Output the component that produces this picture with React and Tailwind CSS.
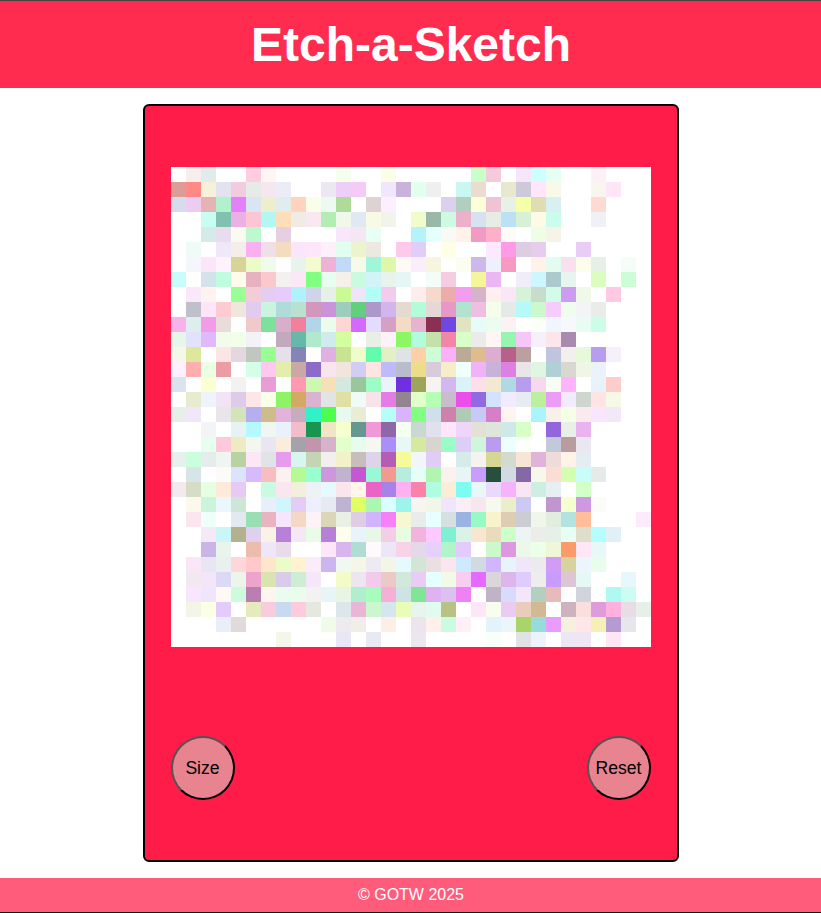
import React from "react";

// colours read off the drawn grid, "." is an untouched white cell
const rows = [
  ". f8eeee e0ebea . . ffcce0 fff5f3 . . . . f5ffee . . fbffe8 . . . . . cbffc9 f5cadd . f5e6f9 cdfffd e5fff3 . . fdf0f6 . . .",
  "dc9d98 ff8a85 f7f1da e2e3ee f2cbe0 e7ebe8 f6e6ef ececf7 . . ebe8f2 eecdf8 f3cbf5 . f0e7fc c9b3da e3ffed eef0ee . c9f7f1 ecdccf . e8e8cf cdc9db ffe6fd f9f9e9 . . f9f5ef ffe5f8 . .",
  "d8dcea eecbf0 e5b3b3 b0f2cc e381fa d9e6f2 edeecd e1ecef ffd3bd fafde9 eff9f4 aedb9a . ddd3d5 fdefff . . . ddcfee b2cebf feffd9 efc3d4 e8f1e8 f5ffa8 dfdeb3 d9f0f2 . . fddbd0 . . .",
  ". . c9fdf1 80c1af ecb1e4 fdc4d3 b2f7f4 ffdfb8 f0ebe3 f9e8f1 b2edb3 f2f7ec dfe9f1 f8fae6 f1f4eb . f0fcc9 99b8a8 cdfae0 edb0cb d6e2f1 e7ece5 bce0f4 d8f1d6 fdfbe6 ccfdec . . eff1f5 . . .",
  ". . d4ebe9 e9dcec f8fbee bdf8d0 . e6cee3 . . . f9e5fc f4e7f3 e8fff6 . . b5f2fc e5ffff f9faf6 fff2e8 f299c4 ffb0c8 fdfcf9 . edfde6 f6f4e8 . . . . . .",
  ". effbf6 . eee8f9 f5edea f8b0f0 f0dfe8 f4dcbe f9e6fd fde6f9 fcf1fb e0ffef ebf4cd eee8e2 . ffc9ec e0cdf8 . ffffe6 . . fde8fe ff9be6 ddcce2 e6cdee . . e9cdf7 . . . .",
  ". f4f6fb fde5f9 fef3fa d6d497 ebfcc9 f0fbeb . e7f4ee f2fccc f0b1d7 c3d9f8 f7f9e9 9ff6d9 dcf8a8 fffbf4 faedfc f7f5dd . fbfdef cdb8ec eef0fc f799c0 . fff3e8 e2fcf2 f8e0f0 fcfeec e6f0e6 . f4fdf8 .",
  "c9fdfb . d4e2ea c0fce0 fffbec e7b2bf f9c9cd f2f1ef fbe7f6 80ff80 e7fdef f5f0ea c9fbe0 d2f3f8 e9f3ec e6f6f5 . f4fcf8 f7cce3 . f5f599 ecb5f4 . f0ecf8 ccf7fe acc9cd e6f6ee . dcfdc0 . ccfdd4 .",
  ". f8e8f9 fff3f0 . 99ff95 f2ccd8 e5ccf1 e8cbfd aef2fc d0d4e9 e6f0e6 c9fa94 efe5f8 b0fef5 f2cbee . fdeeec f5d9cd edabac f39df0 d6b3c8 ffefef fae6f6 d6f2d9 c8dccc d2fbe8 cc9cf0 f0f9e9 . ffc9e3 . .",
  ". c0bfcc fee6f8 ffcbd3 efe6dc e2cbee c9f4de afdbd9 b9e0d0 d497bc c994d9 9dcdbd 62cf7c ae98cb d1b5ec e4dad0 b2fcd9 e6d8d6 e699c6 b3e3cf eebfe0 f5fdeb e4ebe6 b5f9f9 ccf9cc f6ccfe effdf0 f3f4f5 e9ece8 . . .",
  "f7b2ec e0edee f29be9 e9dddb . f2c9cb 7ce29b d8aecb f0809b b2d6e9 ebfbec ffd6d6 d26aff e4dcfe d6a0c6 f4dcc4 e8b3d0 8c3053 7047e0 e2e3c2 e6fcf8 ebfdf0 fbf3f3 . fbfff8 f0f6fd f7f8fd e8fcf4 ccfde8 . . .",
  "e8f5ea e2e2fd e1b8fa f2fcea f1fee8 f3f3f7 . c3a9be 66b8ad b0e9cb ceecec d4ff9e . e8f0e6 fcf2f8 8cf765 b0fcdd c4e0ab f285a8 d9ffc9 ebecea fff6f4 96f5b0 f6c6f9 f5f0fb fde5ec a98bb2 . . . . .",
  "f3f8e8 dde89d . fbe6e5 e4d7e1 bfc7bf 96ff8f e6e0ec 8484b6 . dfb0e2 c8e391 effdc9 62fdac e2f0c4 dfe3e4 ffd0a8 ccfdd5 fab0fb bbaa95 dfbc90 dcadcf b76089 bba0a0 . c1c4df f1f0ec e6fadb b79cef f6f0fc . .",
  "fef0fc feaeae eaffe4 ec9da4 . d5fee9 ffc8f0 e3eeac c9a8a5 8d6bc9 f8e5ee f2e5dd d2cdf5 ffe4e2 bfb9fe b8bccd eedd88 d8ccdc f7eec9 effffc f0b3f5 c9b2d9 dc80e2 e8e6e8 e0f5e2 b1d0d4 d8d8d0 f0f6e5 ecf2f9 . . .",
  "dbe3ee . fcffcf . f3f2f0 . e89dd4 fafffb ff98b0 cdf8b2 f5e0b8 d3e8de 99c79b 9cfec4 ecf3fa 702fe0 9ea55a f6f3f0 d3b8ef dcf2f9 fddfec f3e8d0 b0d9e3 b89ced f6d9ec f8fef4 ffb3fd . e8f3f9 ffcccc . .",
  ". e7ebcf eff3fc f2e4f5 dccce8 fce6e8 f8fee8 8ef465 d4a966 d9b3cf e0e4e3 dfdfa6 effcf6 f8e3eb e47ce8 928590 e2ffc9 b4ffb4 c9bccc ec4ee9 9169e0 d3e2fd f0ecfe e7ecf0 bbf09c ea9cf7 f1ebfc ced6cf ffe4e6 f5f9e6 . .",
  "e6f0e8 f2e6f9 . e9e5e8 d4e3b9 b7aef0 cfbc8b e3b3dc c6acbd 30f2c6 4cff4f e8f9f0 e9edd6 . b5fefa dab3fd 80ff80 cfe0ec cf80ad b1c9b7 c9c9f5 d580c6 fef5f0 . aaf5fd f7f1e8 f4ffe6 fae9ef f9e6fd f3e8f7 . .",
  ". . f3f4f8 . e6f3f5 b5f8fe eff7f0 ebf1fb f2bccb 18964f f0e5c4 f5ffd0 65998f f099d9 8f66a8 f4fff1 c9d8d0 e2e0ec fde6fa edd6fa e3e0d6 dee5db cfe9ea d9ffc9 . 9466de e8f0e8 e9b3ef . . . .",
  ". . e6ffee ffc9dc eeebc2 f3f7f0 e9e5f3 fbecdc a4a2ab c195ae d5b3cb e3ffcc e8fcee f4f8ee a98ffa e8f8f5 d6ea9f d8d4d0 99fdc6 ddcdf9 cff6dd b99cef ecffff fdfffb . c3c9d9 b89c9f ebe6f0 . . . .",
  "e6f1ed c9ffdc e5eceb eff6f2 b9d1a3 fde6f5 dfe5e7 e69cec d6f6ee c4d5b4 f3efef f1f1ca c7bdba ded4ea b55cb3 f5fa9b f2f6fa e0cdf5 . d6ecea f5f2f0 d6d696 d3dbd0 f7e5d5 dfb3da eedcd9 fff2e6 e6edf0 . . . .",
  ". d6e5e8 . fcfbf9 dce3fe d6bafd f8bdc0 fbf1ef b6fa95 99ffcf cd96dd c1b2d0 c557d4 99f9d6 f29a90 b8ece0 e6fff6 b0f5b0 fbf2f0 e8f5f6 c99cff 26503d d4dae3 8469a6 f7f8e9 fbddd6 d3ffb0 c9fdf9 e6ebea . . .",
  "f3e9ee d5dec4 e6ffe2 fdeada e6caf3 . c9fbe2 fbe5ee f2f0dc edf2f5 e6fafe f9e5ea fff5e9 ec63c7 a783e9 ffb0f0 f882a9 b0fce0 faeed9 7ffcf2 e9f7f8 ebd9fb f6b3fb f8e6f2 cdeee0 e6f0f3 . d3ffc9 . . . .",
  ". fcf8ec ccf4dc ecf7fd cde6d6 . e9eefb cff6fd e3ccf6 eeeffe e6eaf2 bfb3d2 e0ff60 acf7af daffff 9df4ea f6f5f2 f0f7e9 efe6fe fdeef6 f8e6ee f6faee ebefc9 ccc9f5 . c196cf f5ffd0 ce99e0 fbfbf9 . . .",
  ". fbe5ef effff9 . e2e9f0 9adeb4 e9b3c0 f5e6fe f3d8c5 fdf2f5 dcd6b8 e9f0e4 dfcde3 d2b3fd f680f8 f7f7d2 e9ecea e8ffff d6e0e1 9bb3e0 99f9c4 f9f3cd dccdb3 ccccd3 f1f6ea e1eddf b2e3e1 ffbd99 . . . fdeafb",
  ". . f6e9f7 c9f6f9 b4b18e dfd0f0 f9f2e5 b780d9 f5e8f5 e8fce8 b680d9 fdffec e8f3fc e9f8e6 f4cde6 e8fce2 f2b3de ffc9ff 80f0d3 dcf2e6 f7e7cf e8dcbc ccffc9 ecf4f5 ecece9 e6f0e9 e8fdf4 dddfcd b5fefe e0f0f6 . .",
  ". . c9b6e6 e9f5ec . ecbcac f0e6f9 e9dbe9 . . fde6f5 d6b6ec b0dcd3 fef9fd ebe7f6 f8d2e6 e3d9e8 e6d0fd b0f5c9 e3ccfb . ccf9cc dc99e0 edf8e9 ebffe9 eff7d9 fc9b69 ffe6f5 e8f8f9 . . .",
  ". fae6f6 e9e6f3 e8f1f0 ffd6d9 ffc9c9 ffe6ca ecfcc9 fff2d0 fcebfa cbb6ef f1f8f3 f5f6e6 edeaf1 f2f6e6 e6f9fd d3e6d6 ebe0e1 f9e6ef cfe9ff d1d9e2 d1b5fd e6f5fc efe6fb ebebed d09cf4 d6d39d edf5fc e8fdec . . .",
  ". f2e8ef f3e6f9 dbd9f5 ebf5e9 eea3cc d9e5b0 d9cbea cdedd5 f5e6f9 . f3fcc9 ece6f0 f3c9ec ebc9c6 d2e8dc e8ccf3 e6ffff f2fae6 f9ccf1 e66aff dad6db ddb6ec e0ccfc ededee c89cfc dcc6d3 e6f8f6 . . e6f8fc .",
  ". f9e6fe efe6fe fff9f4 ccfcdd b97fb0 fff5ef e9fcef ecfcec f4f1f3 e6f6f8 e9f5e4 aef0cd a6fdbc f4b0d6 cee3e6 80e696 e0b3f0 dcc0f2 f080f6 . c0b3c8 d8dbfb f3e6fa b1d0bf e9baba . d2d3dc . b0f9f2 ccfcf2 .",
  ". f3f6e6 fbffe6 e3ccfb . e6ebbf f9ccdd c9d9ef fdcbdb e6e8df . dde7eb e9b6d6 ccf6cd d5e6ef e9fdb8 e8f5ee e0fbf0 b9c285 . fee6f8 f8fdf0 e9ccf0 e9ccbb d2b996 . cdb3c0 fbdfdf df9cdc ffb0de e8dde5 e6f0e8",
  ". . . e9eef8 e1dada . . . . . f0fbea edebef f1eeea . fbefe6 . ece6ec fff0e9 ccfce0 ffeff6 . e3f3fa ebf5fb a9d469 98dbdb e99cfc f6f1dc ffe6e8 f6f0b8 b69bd0 e6e6ec .",
  ". . . . . . . f3f6e8 . . . e9e6f5 . e9e9f3 . . ece6ee . . . . f7fff8 . e0e2e6 ebf3fd . ece6f5 f0e6f3 . fee6f5 . .",
];

const cells = rows.flatMap((row) => row.split(" "));

function RoundButton({ label }) {
  return (
    <button className="w-16 h-16 rounded-full border-2 [border-style:outset] border-black bg-[#e88490] text-black text-[17.6px]">
      {label}
    </button>
  );
}

function App() {
  return (
    <div className="flex flex-col h-[913px] bg-white font-['Liberation_Sans',Arial,sans-serif]">
      <header className="h-[88px] border-t border-[#444444] bg-[#ff2c4f] flex items-center justify-center pl-px">
        <h1 className="text-5xl font-bold text-white">Etch-a-Sketch</h1>
      </header>

      <main className="flex-1 flex justify-center pt-4 pb-4">
        <div className="w-[536px] h-[758px] flex flex-col items-center justify-between border-2 border-black rounded-md bg-[#ff1c48] pt-[61px] pb-[60px]">
          <div className="grid grid-cols-[repeat(32,15px)] auto-rows-[15px] bg-white">
            {cells.map((c, i) => (
              <div
                key={i}
                style={{ backgroundColor: c === "." ? "#ffffff" : `#${c}` }}
              />
            ))}
          </div>
          <div className="w-[480px] flex justify-between">
            <RoundButton label="Size" />
            <RoundButton label="Reset" />
          </div>
        </div>
      </main>

      <footer className="h-[35px] border-b border-[#1c1210] bg-[#ff5c7c] flex items-center justify-center pl-px text-white text-base">
        © GOTW 2025
      </footer>
    </div>
  );
}

export default App;
